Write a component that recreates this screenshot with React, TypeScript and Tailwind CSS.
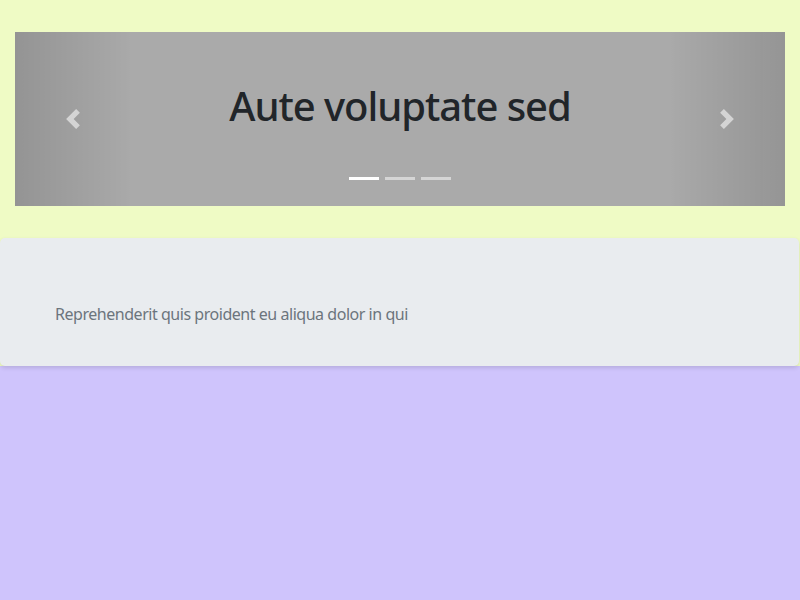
import React from "react";

export default function App() {
  const font = { fontFamily: '"Noto Sans", "Open Sans", Arial, sans-serif' };
  return (
    <div className="min-h-[600px] w-[800px] bg-[#cfc4fc] flex flex-col" style={font}>
      <div className="bg-[#effbc5] pt-8 flex flex-col">
        <div className="mx-[15px] relative h-[174px] bg-[#aaaaaa] overflow-hidden">
          <div className="h-full flex flex-col items-center pt-[50px]">
            <h1 className="text-[40px] leading-[1.2] font-medium tracking-[-0.026em] text-[#212529]">Aute voluptate sed</h1>
          </div>
          <button className="absolute left-0 top-0 h-full w-[15%] flex items-center justify-center opacity-50 bg-[linear-gradient(90deg,rgba(0,0,0,0.25),rgba(0,0,0,0.001))]">
            <svg width="20" height="20" viewBox="0 0 8 8" fill="#fff">
              <path d="M5.25 0l-4 4 4 4 1.5-1.5-2.5-2.5 2.5-2.5-1.5-1.5z" />
            </svg>
          </button>
          <button className="absolute right-0 top-0 h-full w-[15%] flex items-center justify-center opacity-50 bg-[linear-gradient(270deg,rgba(0,0,0,0.25),rgba(0,0,0,0.001))]">
            <svg width="20" height="20" viewBox="0 0 8 8" fill="#fff">
              <path d="M2.75 0l-1.5 1.5 2.5 2.5-2.5 2.5 1.5 1.5 4-4-4-4z" />
            </svg>
          </button>
          <div className="absolute left-0 right-0 bottom-[26px] flex justify-center gap-[6px]">
            <span className="block w-[30px] h-[3px] bg-white" />
            <span className="block w-[30px] h-[3px] bg-white opacity-50" />
            <span className="block w-[30px] h-[3px] bg-white opacity-50" />
          </div>
        </div>
        <div className="mt-8 w-[799px] bg-[#e9ecef] rounded-[5px] pt-16 pb-10 pl-[55px] shadow-[0_2px_4px_rgba(0,0,0,0.12)] relative">
          <p className="text-base leading-6 tracking-[-0.029em] text-[#6c757d]">Reprehenderit quis proident eu aliqua dolor in qui</p>
        </div>
      </div>
    </div>
  );
}
